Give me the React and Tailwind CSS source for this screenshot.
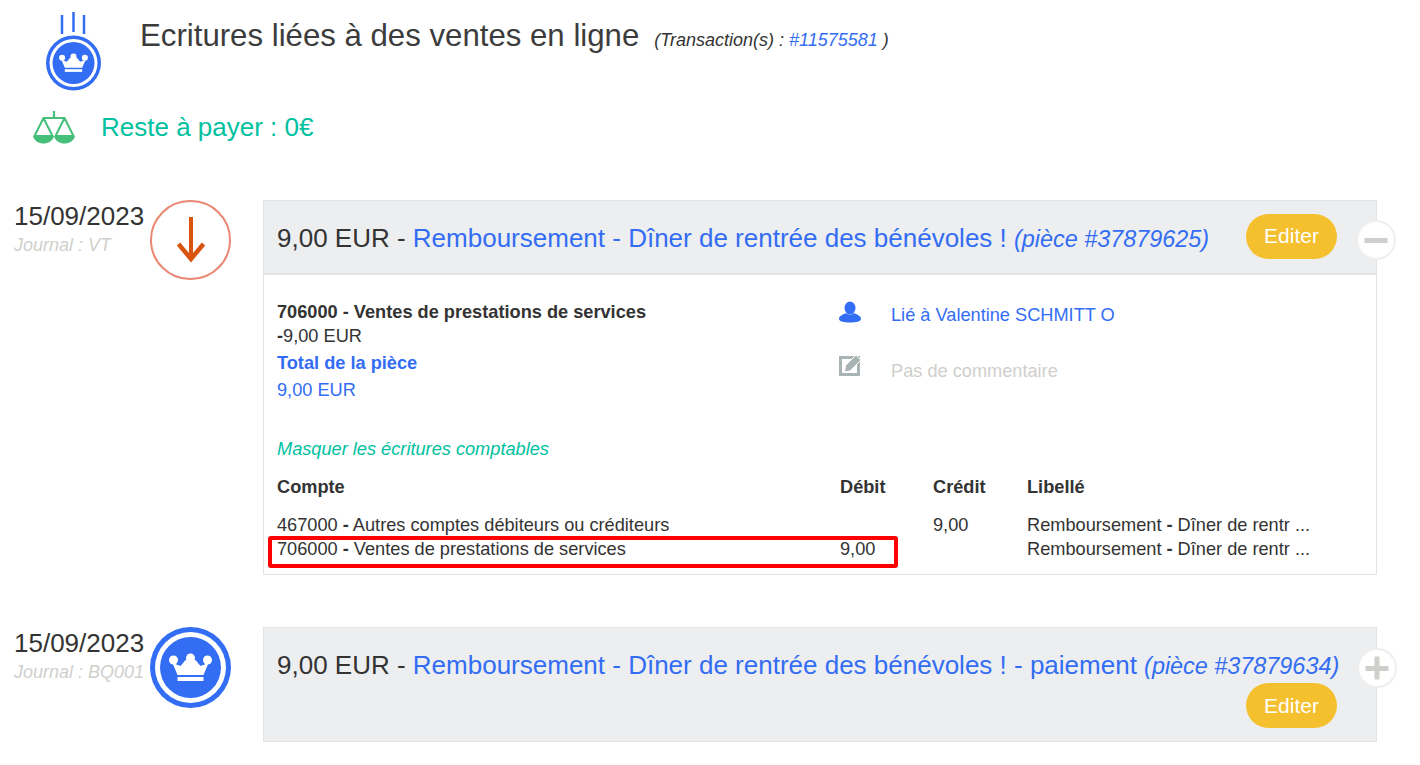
const font = { fontFamily: '"Liberation Sans", Arial, sans-serif' };

function Crown({ cx, cy, s = 1 }) {
  return (
    <g transform={`translate(${cx} ${cy}) scale(${s})`} fill="#fff">
      <circle cx="-17" cy="-7" r="4.500" />
      <circle cx="0" cy="-9" r="4.500" />
      <circle cx="17" cy="-7" r="4.500" />
      <path d="M-18 -4 L-10 -1 L-5 -7 L5 -7 L10 -1 L18 -4 L13 8 L-13 8 Z" />
      <rect x="-13" y="10" width="26" height="4" />
    </g>
  );
}

function Medal() {
  return (
    <svg width="81" height="81" viewBox="0 0 81 81" className="block shrink-0">
      <circle cx="40.5" cy="40.5" r="40.5" fill="#336df4" />
      <circle cx="40.5" cy="40.5" r="35.5" fill="#fff" />
      <circle cx="40.5" cy="40.5" r="30.5" fill="#336df4" />
      <Crown cx={40.5} cy={40} />
    </svg>
  );
}

function HeaderIcon() {
  return (
    <svg width="55" height="79" viewBox="0 0 55 79" className="block shrink-0">
      <path d="M16 3V22M27.500 0V20M38 3V22" stroke="#336df4" strokeWidth="2.500" fill="none" />
      <circle cx="27.500" cy="51" r="27.500" fill="#336df4" />
      <circle cx="27.500" cy="51" r="24" fill="#fff" />
      <circle cx="27.500" cy="51" r="21" fill="#336df4" />
      <Crown cx={27.500} cy={50.500} s={0.67} />
    </svg>
  );
}

function Scale() {
  return (
    <svg width="42" height="33" viewBox="0 0 42 33" className="block shrink-0">
      <path d="M21 0V6.500M10 7H32" stroke="#45bf7a" strokeWidth="2.200" fill="none" />
      <path d="M10.500 7L1.500 25H19.500ZM31.500 7L22.500 25H40.500Z" stroke="#45bf7a" strokeWidth="2" fill="none" strokeLinejoin="round" />
      <path d="M0 25H21C20 30 15 32.500 10.500 32.500C6 32.500 1 30 0 25ZM21 25H42C41 30 36 32.500 31.500 32.500C27 32.500 22 30 21 25Z" fill="#45bf7a" />
    </svg>
  );
}

function ArrowCircle() {
  return (
    <div className="w-[81px] h-[80px] shrink-0 rounded-full border-2 border-[#ea8873] flex items-center justify-center">
      <svg width="28" height="46" viewBox="0 0 28 46">
        <path d="M14 0V42" stroke="#d9550f" strokeWidth="4" fill="none" />
        <path d="M1.500 27L14 42L26.500 27" stroke="#d9550f" strokeWidth="4.500" fill="none" />
      </svg>
    </div>
  );
}

function EditButton({ className = "" }) {
  return (
    <div className={`w-[91px] h-[45px] rounded-full bg-[#f5c02e] text-white text-[21px] flex items-center justify-center shrink-0 ${className}`}>
      Editer
    </div>
  );
}

function Toggle({ plus, className = "" }) {
  return (
    <div className={`absolute w-[40px] h-[40px] rounded-full bg-white border-2 border-[#eeeeee] flex items-center justify-center ${className}`}>
      <svg width="24" height="24" viewBox="0 0 24 24">
        <rect x="0.500" y="10" width="23" height="5" fill="#cfcfcc" />
        {plus && <rect x="9.500" y="0.500" width="5" height="23" fill="#cfcfcc" />}
      </svg>
    </div>
  );
}

function DateCol({ journal }) {
  return (
    <div className="w-[150px] shrink-0 pl-[14px] pt-[1px]">
      <div className="text-[26px] leading-[30px] text-[#333] whitespace-nowrap">15/09/2023</div>
      <div className="text-[18px] leading-[20px] italic text-[#cfcfcc] mt-[4px] whitespace-nowrap">{journal}</div>
    </div>
  );
}

function Title({ text, piece }) {
  return (
    <span className="text-[26px] leading-[30px] text-[#333] whitespace-nowrap">
      9,00 EUR - <span className="text-[#336df4]">{text}</span>{" "}
      <span className="text-[#336df4] italic text-[23.400px]">(pièce #{piece})</span>
    </span>
  );
}

function PersonIcon() {
  return (
    <svg width="22" height="22" viewBox="0 0 22 22" className="block">
      <ellipse cx="11" cy="7" rx="5.500" ry="6.500" fill="#336df4" />
      <path d="M7 12C3 14 0 15 0 18C0 20.500 5 21.500 11 21.500C17 21.500 22 20.500 22 18C22 15 19 14 15 12C13 14 9 14 7 12Z" fill="#336df4" />
    </svg>
  );
}

function NoteIcon() {
  return (
    <svg width="22" height="22" viewBox="0 0 22 22" className="block">
      <path d="M0 1H21V21H0Z" fill="#a9b4b4" />
      <path d="M3 4H18V18H3Z" fill="#fff" />
      <path d="M17 0L22 5L11 16L5.500 17L6.500 10.500Z" fill="#a9b4b4" stroke="#fff" strokeWidth="1" />
    </svg>
  );
}

const cols = "grid grid-cols-[563px_93px_94px_1fr]";

export default function App() {
  return (
    <div style={font} className="w-[1420px] h-[765px] bg-white overflow-hidden text-[#333]">
      <div className="flex pl-[46px] pt-[12px] h-[102px]">
        <HeaderIcon />
        <div className="ml-[39px] pt-[5px] flex items-baseline h-[40px] whitespace-nowrap">
          <span className="text-[31.200px] leading-[38px] text-[#3c3c3c]">Ecritures liées à des ventes en ligne</span>
          <span className="text-[18px] italic ml-[15px]">(Transaction(s) : <span className="text-[#336df4]">#11575581</span> )</span>
        </div>
      </div>

      <div className="flex items-center pl-[33px] h-[50px]">
        <Scale />
        <span className="ml-[26px] text-[26px] text-[#00c19f] whitespace-nowrap">Reste à payer : 0€</span>
      </div>

      <div className="flex mt-[48px]">
        <DateCol journal="Journal : VT" />
        <ArrowCircle />
        <div className="ml-[32px] w-[1114px] h-[375px] border border-[#e3e3e3] relative">
          <div className="h-[74px] bg-[#edeef0] border-b-2 border-[#e3e3e3] flex items-center justify-between pl-[13px] pr-[39px]">
            <span className="pt-[2px]"><Title text="Remboursement - Dîner de rentrée des bénévoles !" piece="37879625" /></span>
            <EditButton className="mb-[2px]" />
          </div>
          <Toggle className="top-[19px] right-[-20px]" />

          <div className="pl-[13px] pt-[25px] text-[18.200px]">
            <div className="flex h-[126px]">
              <div className="w-[563px] leading-[26px]">
                <div className="font-bold leading-[24px]">706000 - Ventes de prestations de services</div>
                <div className="leading-[25px]"><b>-</b>9,00 EUR</div>
                <div className="font-bold text-[#336df4] leading-[28px]">Total de la pièce</div>
                <div className="text-[#336df4] leading-[26px]">9,00 EUR</div>
              </div>
              <div className="flex flex-col ml-[-1px]">
                <div className="flex h-[55px] pt-[1px]">
                  <PersonIcon />
                  <span className="ml-[30px] text-[#336df4] mt-[1px]">Lié à Valentine SCHMITT O</span>
                </div>
                <div className="flex">
                  <NoteIcon />
                  <span className="ml-[30px] text-[#cfcfcc] mt-[3px]">Pas de commentaire</span>
                </div>
              </div>
            </div>
            <div className="italic text-[#00c19f] leading-[22px] mt-[12px]">Masquer les écritures comptables</div>
            <div className={`${cols} font-bold mt-[16px] leading-[22px]`}>
              <div>Compte</div><div>Débit</div><div>Crédit</div><div>Libellé</div>
            </div>
            <div className={`${cols} mt-[15px] leading-[24px]`}>
              <div>467000 <b>-</b> Autres comptes débiteurs ou créditeurs</div><div></div><div>9,00</div><div>Remboursement <b>-</b> Dîner de rentr ...</div>
              <div>706000 <b>-</b> Ventes de prestations de services</div><div>9,00</div><div></div><div>Remboursement <b>-</b> Dîner de rentr ...</div>
            </div>
          </div>
          <div className="absolute left-[4px] top-[335px] w-[630px] h-[32px] border-4 border-[#ff0000] rounded-[3px]" />
        </div>
      </div>

      <div className="flex mt-[52px]">
        <DateCol journal="Journal : BQ001" />
        <Medal />
        <div className="ml-[32px] w-[1114px] h-[115px] border border-[#e3e3e3] bg-[#edeef0] relative pl-[13px] pr-[39px] pt-[22px]">
          <Title text="Remboursement - Dîner de rentrée des bénévoles ! - paiement" piece="37879634" />
          <div className="flex justify-end mt-[2px]"><EditButton /></div>
          <Toggle plus className="top-[20px] right-[-21px]" />
        </div>
      </div>
    </div>
  );
}
